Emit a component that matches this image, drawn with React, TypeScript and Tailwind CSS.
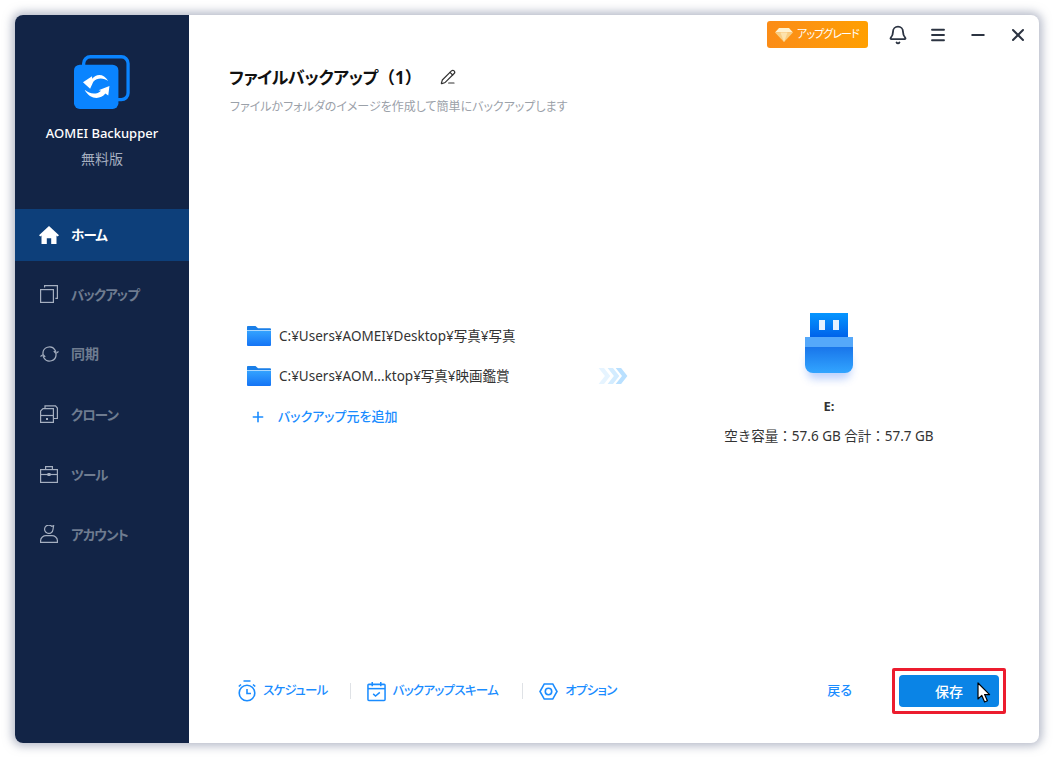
import type { ReactNode } from 'react';
import { Bell, Menu, Minus, X, Plus, PencilLine } from 'lucide-react';

const FONT = "font-['Noto_Sans','Noto_Sans_CJK_JP',sans-serif] [font-feature-settings:'palt']";

function AppLogo() {
  return (
    <svg width="56" height="56" viewBox="0 0 58 58">
      <rect x="10" y="1.8" width="46" height="44.5" rx="7" fill="none" stroke="#0a84ff" strokeWidth="3.4" />
      <rect x="0" y="10" width="46" height="46" rx="6" fill="#0a84ff" />
      <path d="M9.3 28.3 18.7 22 18.8 24.6C23 19 31 19 35.5 27 31 23.5 24 23 20 27.8L16.7 35Z" fill="#fff" />
      <path d="M36.7 32 35.5 42 32.5 40C27 47 16 46 11 36 16 40.5 23.5 41.5 28 37L25.5 36.5Z" fill="#fff" />
    </svg>
  );
}

function HomeIcon() {
  return (
    <svg width="20" height="18" viewBox="0 0 20 18" fill="#fff">
      <path d="M10 0 20 9.2 18.6 10.4 17.5 9.5V18H12.2V12.2H7.8V18H2.5V9.5L1.4 10.4 0 9.2Z" />
    </svg>
  );
}

function CopyIcon() {
  return (
    <svg width="18" height="18" viewBox="0 0 18 18" fill="none" stroke="#a5afc0" strokeWidth="1.2">
      <rect x="0.6" y="4.6" width="12.8" height="12.8" />
      <path d="M4.6 2.6V0.6H17.4V13.4H15.4" />
    </svg>
  );
}

function SyncIcon() {
  return (
    <svg width="19" height="16" viewBox="0 0 19 16" fill="none" stroke="#a5afc0" strokeWidth="1.2">
      <path d="M3 8a6.5 6.5 0 0 1 12-4l1 2" />
      <path d="M16 8a6.5 6.5 0 0 1-12 4l-1-2" />
      <path d="M18.5 5.5 15.9 7.4 13.8 5" />
      <path d="M0.5 10.5 3.1 8.6 5.2 11" />
    </svg>
  );
}

function CloneIcon() {
  return (
    <svg width="18" height="18" viewBox="0 0 18 18" fill="none" stroke="#a5afc0" strokeWidth="1.2">
      <path d="M5 3V0.8H15.5L17.4 3V13.5H14" />
      <path d="M3 3.6H13.4V17.4H0.6V6Z" />
      <path d="M0.6 10.5H13.4" />
      <rect x="6" y="13" width="2" height="2" fill="#a5afc0" stroke="none" />
    </svg>
  );
}

function ToolIcon() {
  return (
    <svg width="18" height="17" viewBox="0 0 18 17" fill="none" stroke="#a5afc0" strokeWidth="1.2">
      <rect x="0.6" y="3.6" width="16.8" height="12.8" />
      <path d="M5.6 3.6V0.6H12.4V3.6" />
      <path d="M0.6 8.5H17.4" />
      <rect x="7.5" y="7" width="3" height="3" fill="#a5afc0" stroke="none" />
    </svg>
  );
}

function UserIcon() {
  return (
    <svg width="18" height="18" viewBox="0 0 18 18" fill="none" stroke="#a5afc0" strokeWidth="1.2">
      <path d="M13 4.5a4.2 4.2 0 1 1-1.2-3.2L13.6 0.7Z" />
      <path d="M0.6 17.4V15.5C0.6 12.5 3.5 10.6 6 10.6H12C14.5 10.6 17.4 12.5 17.4 15.5V17.4Z" />
    </svg>
  );
}

function Gem() {
  return (
    <svg width="18" height="14" viewBox="0 0 18 14">
      <path d="M4 0H14L18 4.6H0Z" fill="#fff2d0" />
      <path d="M0 4.6H18L9 14Z" fill="#f8cf85" />
      <path d="M5.5 4.6H12.5L9 14Z" fill="#fde3ad" />
    </svg>
  );
}

function FolderIcon() {
  return (
    <svg width="24" height="20" viewBox="0 0 24 20">
      <defs>
        <linearGradient id="folderFront" x1="0" y1="0" x2="0" y2="1">
          <stop offset="0" stopColor="#35a4ff" />
          <stop offset="1" stopColor="#1574f5" />
        </linearGradient>
      </defs>
      <path d="M0 1.2A1 1 0 0 1 1 0H8.5L11 2.2H23A1 1 0 0 1 24 3.2V6H0Z" fill="#1a7fe8" />
      <rect x="0" y="4.4" width="24" height="15.6" rx="1" fill="url(#folderFront)" />
      <rect x="0" y="4" width="24" height="1" fill="#a9d8ff" />
    </svg>
  );
}

function UsbIcon() {
  return (
    <svg width="64" height="76" viewBox="0 0 64 76" className="-ml-[1px]">
      <defs>
        <linearGradient id="usbHead" x1="0" y1="0" x2="0" y2="1">
          <stop offset="0" stopColor="#0596ff" />
          <stop offset="1" stopColor="#0062ea" />
        </linearGradient>
        <linearGradient id="usbBody" x1="0" y1="0" x2="0" y2="1">
          <stop offset="0" stopColor="#0f63e2" />
          <stop offset="1" stopColor="#32a5ff" />
        </linearGradient>
        <filter id="usbGlow" x="-30%" y="-30%" width="160%" height="160%">
          <feGaussianBlur stdDeviation="4" />
        </filter>
      </defs>
      <rect x="10" y="40" width="44" height="26" rx="8" fill="#5b8cf5" opacity="0.4" filter="url(#usbGlow)" />
      <rect x="13" y="0" width="38" height="24" fill="url(#usbHead)" />
      <rect x="22" y="7" width="6" height="10" fill="#e4f1ff" />
      <rect x="36" y="7" width="6" height="10" fill="#e4f1ff" />
      <path d="M8 24H56V52A8 8 0 0 1 48 60H16A8 8 0 0 1 8 52Z" fill="url(#usbBody)" />
      <path d="M8 24H56V34H8Z" fill="#55a8fa" />
    </svg>
  );
}

function Chevrons() {
  return (
    <svg width="30" height="18" viewBox="0 0 32 20">
      <path d="M0 1H6L13 10 6 19H0L7 10Z" fill="#e6f4ff" />
      <path d="M10 1H16L23 10 16 19H10L17 10Z" fill="#d3ecff" />
      <path d="M19 1H25L32 10 25 19H19L26 10Z" fill="#b9e0ff" />
    </svg>
  );
}

function TimerIcon() {
  return (
    <svg width="18" height="22" viewBox="0 0 18 22" fill="none" stroke="#1a8cff" strokeWidth="1.6">
      <circle cx="9" cy="13" r="7.8" />
      <path d="M5.5 1H12.5" />
      <path d="M9 9V13.5H13" />
      <path d="M0.8 6.5 3 4.5M17.2 6.5 15 4.5" />
    </svg>
  );
}

function CalendarIcon() {
  return (
    <svg width="19" height="21" viewBox="0 0 20 21" fill="none" stroke="#1a8cff" strokeWidth="1.6">
      <rect x="1" y="3" width="18" height="17" rx="1" />
      <path d="M1 7.5H19" />
      <path d="M5.5 0.5V5M14.5 0.5V5" />
      <path d="M6.5 13 9 15.2 13.5 11.5" />
    </svg>
  );
}

function HexIcon() {
  return (
    <svg width="19" height="17" viewBox="0 0 20 18" fill="none" stroke="#1a8cff" strokeWidth="1.7">
      <path d="M5.5 1H14.5L19 9 14.5 17H5.5L1 9Z" />
      <circle cx="10" cy="9" r="3.4" />
    </svg>
  );
}

function Cursor() {
  return (
    <svg width="14" height="22" viewBox="0 0 14 22" className="absolute left-[78px] top-[7px]">
      <path d="M1 1V17L4.8 13.4 7.6 20 10.4 18.8 7.6 12.6H12.6Z" fill="#fff" stroke="#000" strokeWidth="1.2" strokeLinejoin="round" />
    </svg>
  );
}

const navItems: { label: string; icon: ReactNode; text: string }[] = [
  { label: 'バックアップ', icon: <CopyIcon />, text: 'text-[13.5px] tracking-[-0.9px] mt-[2px]' },
  { label: '同期', icon: <SyncIcon />, text: 'text-[14px] -mt-[2px]' },
  { label: 'クローン', icon: <CloneIcon />, text: 'text-[13.5px] tracking-[-0.9px] mt-[2px]' },
  { label: 'ツール', icon: <ToolIcon />, text: 'text-[13.5px] tracking-[-0.9px] mt-[2px]' },
  { label: 'アカウント', icon: <UserIcon />, text: 'text-[13.5px] tracking-[-0.9px] mt-[2px]' },
];

function Sidebar() {
  return (
    <aside className="w-[174px] shrink-0 bg-[#122446] flex flex-col">
      <div className="flex flex-col items-center pt-[40px]">
        <AppLogo />
        <div className="mt-[12px] text-[13px] leading-[20px] font-medium text-white">AOMEI Backupper</div>
        <div className="mt-[6px] text-[14px] leading-[20px] text-[#a5afc0]">無料版</div>
      </div>
      <div className="mt-[40px] h-[52px] bg-[#0d3f7a] flex items-center pl-[24px] gap-[12px]">
        <HomeIcon />
        <span className="text-[13.5px] tracking-[-0.9px] font-bold text-white">ホーム</span>
      </div>
      <nav className="mt-[3px] flex flex-col">
        {navItems.map((item) => (
          <div key={item.label} className="h-[60px] flex items-center pl-[25px]">
            <span className="w-[31px] flex items-center">{item.icon}</span>
            <span className={`${item.text} font-bold text-[#6f7c90]`}>{item.label}</span>
          </div>
        ))}
      </nav>
    </aside>
  );
}

function TopBar() {
  return (
    <div className="h-[39px] flex items-center justify-end pr-[11px] shrink-0">
      <div className="h-[27px] w-[101px] rounded-[3px] bg-gradient-to-r from-[#fb8c17] to-[#ff9f00] flex items-center pl-[8px] gap-[4px]">
        <Gem />
        <span className="text-[11px] tracking-[-0.9px] text-white">アップグレード</span>
      </div>
      <div className="ml-[20px] flex items-center gap-[20px] text-[#2c3442]">
        <span className="w-[20px] flex justify-center"><Bell size={20} strokeWidth={2.2} /></span>
        <span className="w-[20px] flex justify-center"><Menu size={18} strokeWidth={2.5} /></span>
        <span className="w-[20px] flex justify-center"><Minus size={20} strokeWidth={2.2} /></span>
        <span className="w-[20px] flex justify-center"><X size={22} strokeWidth={2.4} /></span>
      </div>
    </div>
  );
}

function SourceRow({ path }: { path: string }) {
  return (
    <div className="h-[40px] flex items-center gap-[8px]">
      <FolderIcon />
      <span className="text-[13.5px] text-[#333]">{path}</span>
    </div>
  );
}

function FooterLink({ icon, label }: { icon: ReactNode; label: string }) {
  return (
    <div className="flex items-center gap-[7px]">
      {icon}
      <span className="text-[12.5px] tracking-[-0.7px] font-medium text-[#1a8cff] mt-[1px]">{label}</span>
    </div>
  );
}

export default function App() {
  return (
    <div className={`w-[1054px] h-[758px] bg-white p-[15px] ${FONT}`}>
      <div className="w-[1024px] h-[728px] flex rounded-[8px] overflow-hidden bg-white shadow-[0_0_10px_3px_rgba(120,130,155,0.55)]">
        <Sidebar />
        <main className="flex-1 flex flex-col min-w-0">
          <TopBar />
          <div className="pl-[40px] pt-[11px] shrink-0">
            <div className="flex items-center gap-[18px] h-[26px]">
              <h1 className="text-[17px] font-bold text-[#111] whitespace-nowrap tracking-[-0.4px]">
                ファイルバックアップ<span className="[font-feature-settings:normal] tracking-normal">（1）</span>
              </h1>
              <PencilLine size={16} strokeWidth={1.8} className="text-[#333] -mt-[2px]" />
            </div>
            <p className="mt-[7px] ml-[1px] text-[12px] leading-[18px] text-[#9ba1a9]">ファイルかフォルダのイメージを作成して簡単にバックアップします</p>
          </div>

          <div className="flex-1 flex pl-[58px] min-h-0">
            <div className="w-[351px] pt-[200px] shrink-0">
              <SourceRow path="C:¥Users¥AOMEI¥Desktop¥写真¥写真" />
              <SourceRow path="C:¥Users¥AOM...ktop¥写真¥映画鑑賞" />
              <div className="h-[42px] flex items-center text-[#1a8cff]">
                <Plus size={16} strokeWidth={2.4} className="ml-[3px]" />
                <span className="ml-[12px] text-[13px] font-medium">バックアップ元を追加</span>
              </div>
            </div>
            <div className="pt-[251px] shrink-0">
              <Chevrons />
            </div>
            <div className="ml-[95px] w-[212px] pt-[197px] flex flex-col items-center shrink-0">
              <UsbIcon />
              <div className="mt-[8px] text-[13px] font-bold text-[#333]">E:</div>
              <div className="mt-[9px] text-[13.5px] text-[#333] whitespace-nowrap [font-feature-settings:normal]">空き容量：57.6 GB 合計：57.7 GB</div>
            </div>
          </div>

          <div className="h-[76px] shrink-0 flex pl-[49px] pr-[33px]">
            <div className="h-[48px] flex items-center">
              <FooterLink icon={<TimerIcon />} label="スケジュール" />
              <span className="w-px h-[16px] bg-[#dfe2e6] ml-[22px] mr-[16px]" />
              <FooterLink icon={<CalendarIcon />} label="バックアップスキーム" />
              <span className="w-px h-[16px] bg-[#dfe2e6] ml-[24px] mr-[16px]" />
              <FooterLink icon={<HexIcon />} label="オプション" />
            </div>
            <div className="ml-auto flex items-start">
              <span className="h-[48px] flex items-center text-[13px] font-medium text-[#1a8cff]">戻る</span>
              <div className="ml-[40px] mt-[1px] w-[114px] h-[46px] border-[3px] border-[#ec1c2e] rounded-[2px] p-[4px]">
                <div className="relative w-full h-full bg-[#0a84e6] rounded-[4px] flex items-center justify-center text-[14px] font-medium text-white">
                  保存
                  <Cursor />
                </div>
              </div>
            </div>
          </div>
        </main>
      </div>
    </div>
  );
}
